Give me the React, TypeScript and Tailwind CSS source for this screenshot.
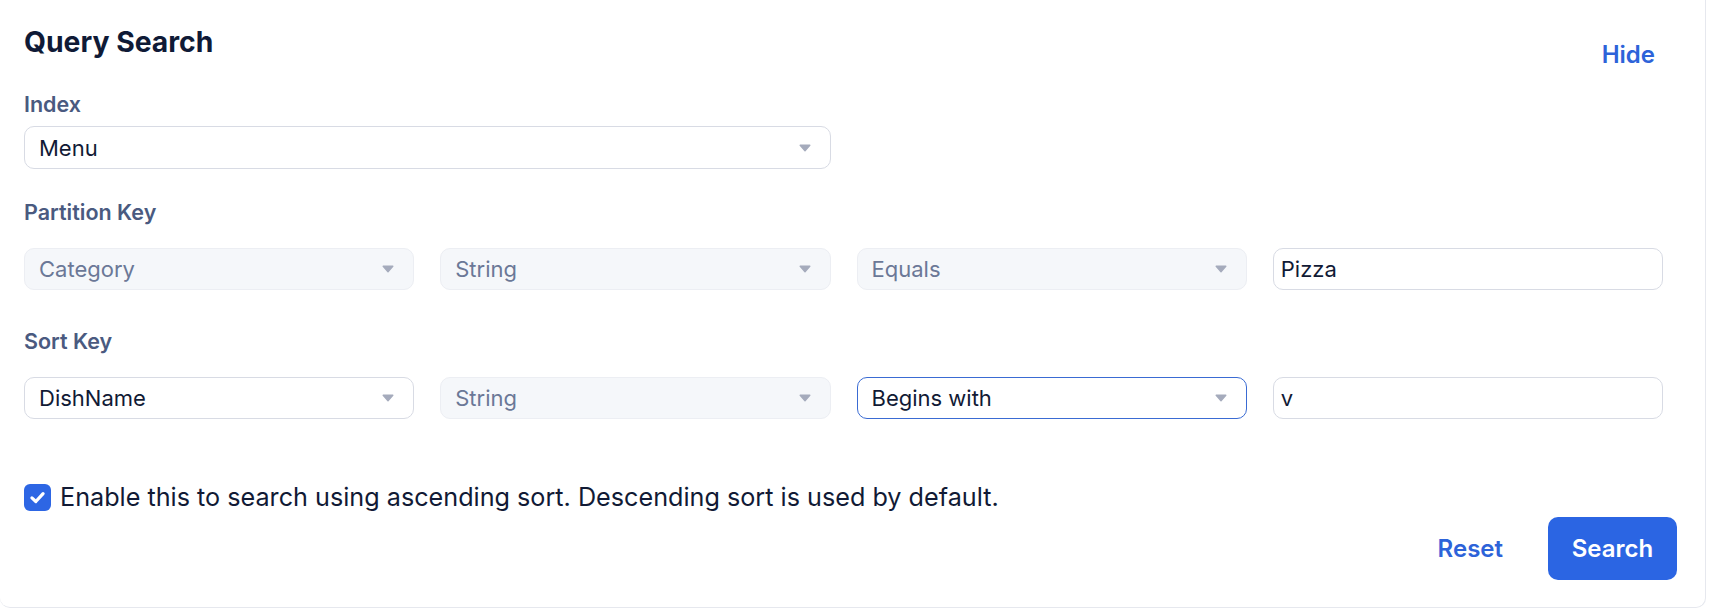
import React from "react";

function Chevron() {
  return (
    <svg width="12" height="8" viewBox="0 0 12 8" className="shrink-0">
      <path d="M1.2 1.2 H10.8 L6 6.8 Z" fill="#a5abbc" stroke="#a5abbc" strokeWidth="1.4" strokeLinejoin="round" />
    </svg>
  );
}

type SelectProps = { value: string; variant?: "normal" | "disabled" | "focused"; tall?: boolean };

function Select({ value, variant = "normal", tall }: SelectProps) {
  const tone =
    variant === "disabled"
      ? "border-[#eceef3] bg-[#f5f7fa] text-[#6b7897]"
      : variant === "focused"
      ? "border-[#3a6bd3] bg-white text-[#111a35]"
      : "border-[#d8dbe4] bg-white text-[#111a35]";
  return (
    <div
      className={`flex ${tall ? "h-[43px]" : "h-[42px]"} items-center justify-between rounded-[10px] border pl-[14px] pr-[19px] text-[22px] leading-none ${tone}`}
    >
      <span>{value}</span>
      <Chevron />
    </div>
  );
}

function TextInput({ value }: { value: string }) {
  return (
    <div className="flex h-[42px] items-center rounded-[10px] border border-[#d8dbe4] bg-white pl-[7px] text-[22px] leading-none text-[#111a35]">
      {value}
    </div>
  );
}

function Label({ children }: { children: React.ReactNode }) {
  return <div className="text-[21.5px] font-semibold leading-[26px] text-[#4a5a80]">{children}</div>;
}

export default function App() {
  return (
    <div className="min-h-[614px] bg-white font-['Inter',sans-serif]">
      <div className="w-[1706px] rounded-b-[10px] border-r border-b border-[#e6e8ee] bg-white pt-[25px] pb-[27px] pl-[24px] pr-[28px]">
        <div className="flex items-start justify-between">
          <h1 className="text-[28.3px] font-bold leading-[35px] text-[#0f1a36]">Query Search</h1>
          <button className="mt-[15px] mr-[22px] text-[24px] font-semibold leading-[29px] text-[#2d63d9]">Hide</button>
        </div>

        <div className="mr-[14px]">
          <div className="mt-[22px]">
            <Label>Index</Label>
          </div>
          <div className="mt-[9px] grid grid-cols-2 gap-[26px]">
            <Select value="Menu" tall />
          </div>

          <div className="mt-[30px]">
            <Label>Partition Key</Label>
          </div>
          <div className="mt-[23px] grid grid-cols-4 gap-[26px]">
            <Select value="Category" variant="disabled" />
            <Select value="String" variant="disabled" />
            <Select value="Equals" variant="disabled" />
            <TextInput value="Pizza" />
          </div>

          <div className="mt-[38px]">
            <Label>Sort Key</Label>
          </div>
          <div className="mt-[23px] grid grid-cols-4 gap-[26px]">
            <Select value="DishName" />
            <Select value="String" variant="disabled" />
            <Select value="Begins with" variant="focused" />
            <TextInput value="v" />
          </div>
        </div>

        <label className="mt-[63px] flex h-[30px] items-center gap-[9px]">
          <span className="flex h-[27px] w-[27px] items-center justify-center rounded-[6px] bg-[#2d66e4]">
            <svg width="19" height="19" viewBox="0 0 16 16" fill="none">
              <path d="M3.3 8.3 L6.6 11.4 L12.7 4.7" stroke="white" strokeWidth="2.7" strokeLinecap="round" strokeLinejoin="round" />
            </svg>
          </span>
          <span className="text-[25.2px] leading-[30px] text-[#111a35]">
            Enable this to search using ascending sort. Descending sort is used by default.
          </span>
        </label>

        <div className="mt-[5px] flex items-center justify-end">
          <button className="mr-[45px] text-[24px] font-semibold leading-[29px] text-[#2d63d9]">Reset</button>
          <button className="flex h-[63px] w-[129px] items-center justify-center rounded-[10px] bg-[#2b65e3] text-[24px] font-semibold leading-[29px] text-white">
            Search
          </button>
        </div>
      </div>
    </div>
  );
}
